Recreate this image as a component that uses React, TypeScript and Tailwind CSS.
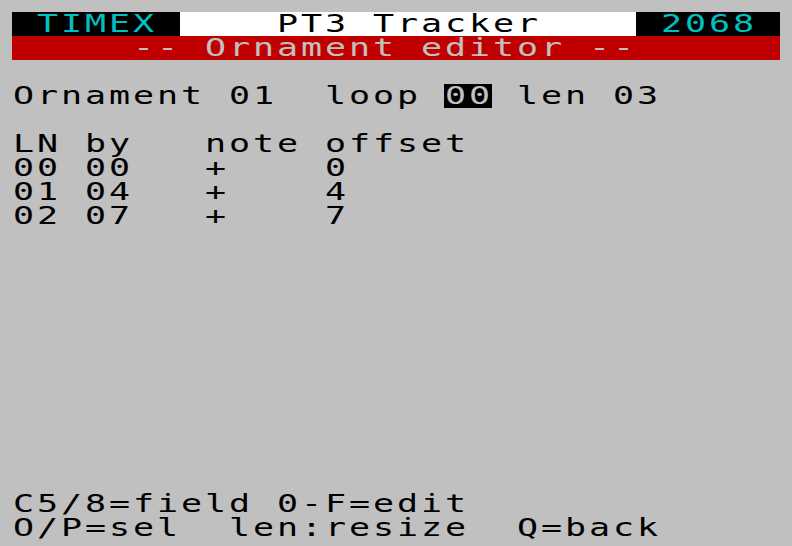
type Seg = { text: string; cls?: string };

const GRAY = 'text-[#c0c0c0]';

// one character per 24px cell, like the 8px spectrum grid at 3x
function Cell({ ch }: { ch: string }) {
  return (
    <span className="inline-flex w-6 justify-center">
      <span className="inline-block scale-x-[1.4]">{ch === ' ' ? '\u00a0' : ch}</span>
    </span>
  );
}

function Row({ segs = [] }: { segs?: Seg[] }) {
  return (
    <div className="flex h-6 leading-6 whitespace-pre">
      {segs.map((s, i) => (
        <span key={i} className={`flex ${s.cls ?? ''}`}>
          {s.text.split('').map((ch, j) => (
            <Cell key={j} ch={ch} />
          ))}
        </span>
      ))}
    </div>
  );
}

const t = (text: string): Seg[] => [{ text }];

export default function App() {
  const rows: Seg[][] = [
    [
      { text: ' TIMEX ', cls: 'bg-black text-[#00c0c0]' },
      { text: '    PT3 Tracker    ', cls: 'bg-white text-black' },
      { text: ' 2068 ', cls: 'bg-black text-[#00c0c0]' },
    ],
    [{ text: '     -- Ornament editor --      ', cls: `bg-[#c00000] ${GRAY}` }],
    [],
    [
      { text: 'Ornament 01  loop ' },
      { text: '00', cls: `bg-black ${GRAY}` },
      { text: ' len 03' },
    ],
    [],
    t('LN by   note offset'),
    t('00 00   +    0'),
    t('01 04   +    4'),
    t('02 07   +    7'),
    [], [], [], [], [], [], [], [], [], [], [],
    t('C5/8=field 0-F=edit'),
    t('O/P=sel  len:resize  Q=back'),
  ];

  return (
    <div className="w-[792px] h-[546px] overflow-hidden bg-[#c0c0c0] p-3 text-black font-['DejaVu_Sans_Mono',monospace] text-[25px]">
      {rows.map((segs, i) => (
        <Row key={i} segs={segs} />
      ))}
    </div>
  );
}
